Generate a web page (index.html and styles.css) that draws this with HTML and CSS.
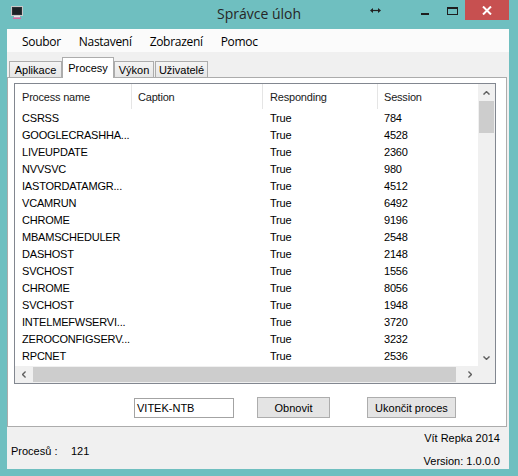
FILE: index.html
```html
<!DOCTYPE html>
<html lang="cs">
<head>
<meta charset="utf-8">
<title>Správce úloh</title>
<link rel="stylesheet" href="styles.css">
</head>
<body>
<div class="window">
  <div class="titlebar">
    <div class="tb-left">
      <svg class="app-icon" width="12" height="13" viewBox="0 0 12 13">
        <rect x="0.5" y="0.5" width="11" height="9" fill="#2c3136" stroke="#c8c8c8"/>
        <rect x="2" y="2" width="8" height="6" fill="#1d2226"/>
        <rect x="3" y="10" width="6" height="1.5" fill="#e6e6e6"/>
        <rect x="2" y="11.5" width="8" height="1.5" fill="#d9679f"/>
      </svg>
    </div>
    <div class="tb-title">Správce úloh</div>
    <div class="tb-right">
      <svg class="ico-resize" width="11" height="5" viewBox="0 0 11 5">
        <path d="M2 2.5 H9" stroke="#222" stroke-width="1.2"/>
        <path d="M0 2.5 L3 0 V5 Z M11 2.5 L8 0 V5 Z" fill="#222"/>
      </svg>
      <span class="ico-min"></span>
      <span class="ico-max"></span>
      <span class="btn-close">
        <svg width="10" height="9" viewBox="0 0 10 9">
          <path d="M1 0.5 L9 8.5 M9 0.5 L1 8.5" stroke="#fff" stroke-width="2"/>
        </svg>
      </span>
    </div>
  </div>

  <div class="client">
    <div class="menubar">
      <span>Soubor</span>
      <span>Nastavení</span>
      <span>Zobrazení</span>
      <span>Pomoc</span>
    </div>

    <div class="tabarea">
      <div class="tabs">
        <div class="tab tab-apl">Aplikace</div>
        <div class="tab tab-sel">Procesy</div>
        <div class="tab tab-vyk">Výkon</div>
        <div class="tab tab-uziv">Uživatelé</div>
      </div>
      <div class="page">
        <div class="list">
          <div class="list-main">
            <div class="lv">
              <div class="lv-head">
                <div class="c c1">Process name</div>
                <div class="c c2">Caption</div>
                <div class="c c3">Responding</div>
                <div class="c c4">Session</div>
              </div>
              <div class="row"><div class="c c1">CSRSS</div><div class="c c2"></div><div class="c c3">True</div><div class="c c4">784</div></div>
              <div class="row"><div class="c c1">GOOGLECRASHHA...</div><div class="c c2"></div><div class="c c3">True</div><div class="c c4">4528</div></div>
              <div class="row"><div class="c c1">LIVEUPDATE</div><div class="c c2"></div><div class="c c3">True</div><div class="c c4">2360</div></div>
              <div class="row"><div class="c c1">NVVSVC</div><div class="c c2"></div><div class="c c3">True</div><div class="c c4">980</div></div>
              <div class="row"><div class="c c1">IASTORDATAMGR...</div><div class="c c2"></div><div class="c c3">True</div><div class="c c4">4512</div></div>
              <div class="row"><div class="c c1">VCAMRUN</div><div class="c c2"></div><div class="c c3">True</div><div class="c c4">6492</div></div>
              <div class="row"><div class="c c1">CHROME</div><div class="c c2"></div><div class="c c3">True</div><div class="c c4">9196</div></div>
              <div class="row"><div class="c c1">MBAMSCHEDULER</div><div class="c c2"></div><div class="c c3">True</div><div class="c c4">2548</div></div>
              <div class="row"><div class="c c1">DASHOST</div><div class="c c2"></div><div class="c c3">True</div><div class="c c4">2148</div></div>
              <div class="row"><div class="c c1">SVCHOST</div><div class="c c2"></div><div class="c c3">True</div><div class="c c4">1556</div></div>
              <div class="row"><div class="c c1">CHROME</div><div class="c c2"></div><div class="c c3">True</div><div class="c c4">8056</div></div>
              <div class="row"><div class="c c1">SVCHOST</div><div class="c c2"></div><div class="c c3">True</div><div class="c c4">1948</div></div>
              <div class="row"><div class="c c1">INTELMEFWSERVI...</div><div class="c c2"></div><div class="c c3">True</div><div class="c c4">3720</div></div>
              <div class="row"><div class="c c1">ZEROCONFIGSERV...</div><div class="c c2"></div><div class="c c3">True</div><div class="c c4">3232</div></div>
              <div class="row"><div class="c c1">RPCNET</div><div class="c c2"></div><div class="c c3">True</div><div class="c c4">2536</div></div>
            </div>
            <div class="vscroll">
              <div class="sbtn">
                <svg width="7" height="4" viewBox="0 0 7 4"><path d="M0.5 3.6 L3.5 0.6 L6.5 3.6" fill="none" stroke="#606060" stroke-width="1.4"/></svg>
              </div>
              <div class="vthumb"></div>
              <div class="sfill"></div>
              <div class="sbtn">
                <svg width="7" height="4" viewBox="0 0 7 4"><path d="M0.5 0.4 L3.5 3.4 L6.5 0.4" fill="none" stroke="#606060" stroke-width="1.4"/></svg>
              </div>
            </div>
          </div>
          <div class="hscroll-row">
            <div class="hscroll">
              <div class="sbtn">
                <svg width="4" height="7" viewBox="0 0 4 7"><path d="M3.6 0.5 L0.6 3.5 L3.6 6.5" fill="none" stroke="#606060" stroke-width="1.4"/></svg>
              </div>
              <div class="hthumb"></div>
              <div class="sfill"></div>
              <div class="sbtn">
                <svg width="4" height="7" viewBox="0 0 4 7"><path d="M0.4 0.5 L3.4 3.5 L0.4 6.5" fill="none" stroke="#606060" stroke-width="1.4"/></svg>
              </div>
            </div>
            <div class="corner"></div>
          </div>
        </div>

        <div class="controls">
          <div class="textbox">VITEK-NTB</div>
          <div class="button btn-refresh">Obnovit</div>
          <div class="button btn-kill">Ukončit proces</div>
        </div>
      </div>
    </div>

    <div class="status">
      <div class="status-left">
        <span class="st-label">Procesů :</span>
        <span>121</span>
      </div>
      <div class="status-right">
        <span>Vít Repka 2014</span>
        <span>Version: 1.0.0.0</span>
      </div>
    </div>
  </div>
</div>
</body>
</html>
```

FILE: styles.css
```css
* { box-sizing: border-box; }

body {
  margin: 0;
  background: #6fbfc0;
  font-family: "Liberation Sans", Arial, sans-serif;
  font-size: 11px;
  color: #000;
}

.window {
  width: 518px;
  height: 476px;
  display: flex;
  flex-direction: column;
}

/* title bar */
.titlebar {
  height: 29px;
  display: grid;
  grid-template-columns: 1fr auto 1fr;
}
.tb-left {
  padding: 6px 0 0 11px;
}
.app-icon { display: block; }
.tb-title {
  font-family: "Open Sans", sans-serif;
  font-size: 14px;
  line-height: 28px;
  color: #262626;
}
.tb-right {
  display: flex;
  justify-content: flex-end;
  align-items: flex-start;
  padding-right: 9px;
}
.ico-resize {
  display: block;
  margin-top: 8px;
  margin-right: 40px;
}
.ico-min {
  display: block;
  width: 8px;
  height: 2px;
  background: #1e1e1e;
  margin-top: 13px;
  margin-right: 18px;
}
.ico-max {
  display: block;
  width: 11px;
  height: 8px;
  border: 1px solid #1e1e1e;
  border-top-width: 2px;
  margin-top: 7px;
  margin-right: 7px;
}
.btn-close {
  width: 44px;
  height: 20px;
  background: #c75050;
  display: flex;
  align-items: center;
  justify-content: center;
}
.btn-close svg { display: block; }

/* client */
.client {
  margin-left: 7px;
  width: 502px;
  height: 440px;
  background: #f0f0f0;
  display: flex;
  flex-direction: column;
}

.menubar {
  height: 23px;
  flex: none;
  background: #fbfbfb;
  display: flex;
  align-items: center;
  gap: 18px;
  padding: 2px 0 0 15px;
  font-family: "Open Sans", sans-serif;
  font-size: 12px;
  letter-spacing: -0.3px;
}

/* tabs */
.tabarea {
  display: flex;
  flex-direction: column;
  flex: none;
}
.tabs {
  height: 26px;
  margin-bottom: -1px;
  padding-left: 2px;
  display: flex;
  align-items: flex-end;
  z-index: 1;
}
.tab {
  height: 16px;
  margin-bottom: 1px;
  border: 1px solid #acacac;
  border-bottom: none;
  background: linear-gradient(#f4f4f4, #e6e6e6);
  display: flex;
  align-items: center;
  justify-content: center;
  white-space: nowrap;
}
.tab-apl { width: 53px; }
.tab-sel {
  width: 52px;
  height: 21px;
  margin-bottom: 0;
  background: #fff;
}
.tab-vyk { width: 40px; }
.tab-uziv { width: 53px; margin-left: 1px; }

.page {
  width: 500px;
  height: 350px;
  border: 1px solid #acacac;
  background: #fff;
  padding: 5px 0 0 6px;
}

/* list view */
.list {
  width: 482px;
  height: 301px;
  border: 1px solid #828790;
  display: flex;
  flex-direction: column;
}
.list-main {
  height: 282px;
  display: flex;
}
.lv {
  width: 463px;
  overflow: hidden;
  background: #fff;
}
.lv-head {
  height: 25px;
  display: flex;
}
.lv-head .c {
  border-right: 1px solid #e5e5e5;
  color: #1a1a1a;
}
.row {
  height: 17px;
  display: flex;
}
.c {
  flex: none;
  display: flex;
  align-items: center;
  white-space: nowrap;
  letter-spacing: -0.2px;
}
.c1 { width: 117px; padding-left: 7px; }
.c2 { width: 131px; padding-left: 6px; }
.c3 { width: 115px; padding-left: 7px; }
.c4 { width: 100px; padding-left: 6px; }
.lv-head .c4 { border-right: none; }

.vscroll {
  width: 17px;
  background: #f0f0f0;
  display: flex;
  flex-direction: column;
}
.sbtn {
  width: 17px;
  height: 17px;
  flex: none;
  display: flex;
  align-items: center;
  justify-content: center;
}
.sbtn svg { display: block; }
.sfill { flex: 1; }
.vthumb {
  height: 32px;
  margin: 0 1px;
  background: #cdcdcd;
  flex: none;
}
.hscroll-row {
  height: 17px;
  display: flex;
}
.hscroll {
  width: 463px;
  background: #f0f0f0;
  display: flex;
}
.hthumb {
  width: 423px;
  margin: 1px 0 1px 1px;
  background: #cdcdcd;
  flex: none;
}
.corner {
  width: 17px;
  background: #f0f0f0;
}

/* controls */
.controls {
  margin-top: 13px;
  height: 21px;
  padding-left: 120px;
  display: flex;
  align-items: center;
}
.textbox {
  width: 100px;
  height: 20px;
  border: 1px solid #a3a3a3;
  background: #fff;
  padding-left: 2px;
  line-height: 18px;
}
.button {
  height: 21px;
  border: 1px solid #adadad;
  background: #e4e4e4;
  display: flex;
  align-items: center;
  justify-content: center;
}
.btn-refresh { width: 73px; margin-left: 23px; }
.btn-kill { width: 89px; margin-left: 37px; }

/* status */
.status {
  height: 42px;
  flex: none;
  display: flex;
  justify-content: space-between;
  padding: 0 9px 0 4px;
}
.status-left {
  margin-top: 18px;
  display: flex;
  line-height: 13px;
  height: 13px;
}
.st-label { width: 60px; }
.status-right {
  display: flex;
  flex-direction: column;
  align-items: flex-end;
  gap: 10px;
  padding-top: 5px;
  line-height: 13px;
}
```
